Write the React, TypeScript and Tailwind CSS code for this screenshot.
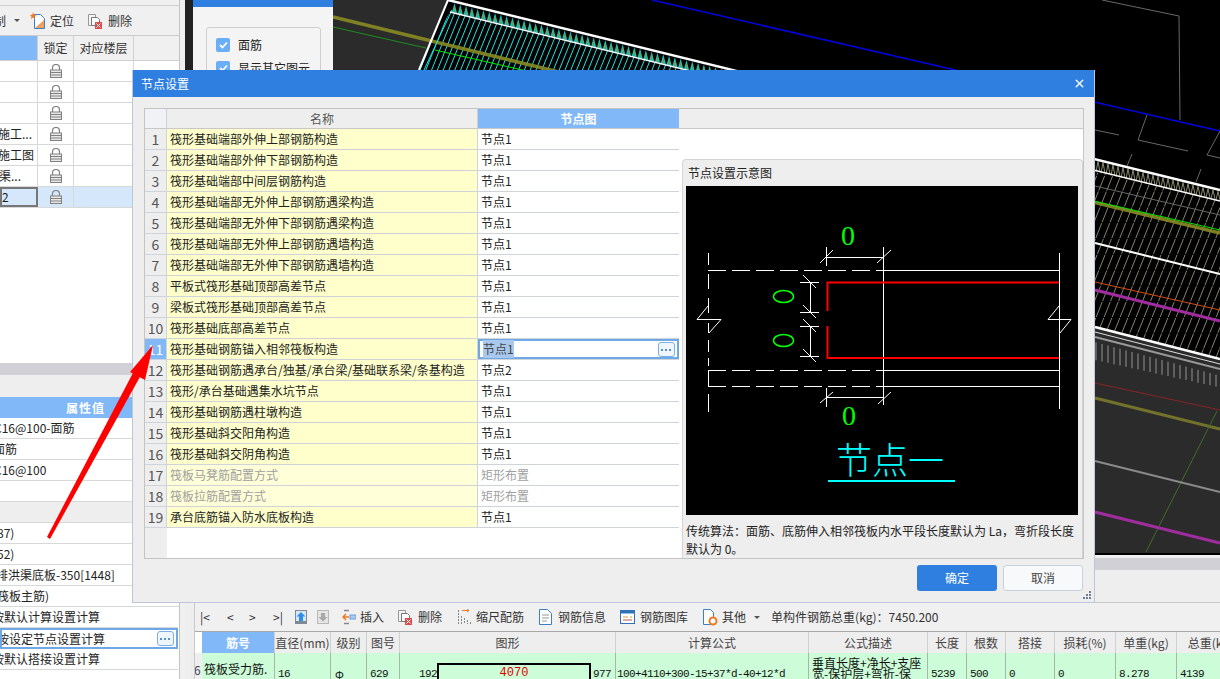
import { X } from "lucide-react";

const nodeRows = [
  { name: "筏形基础端部外伸上部钢筋构造", value: "节点1" },
  { name: "筏形基础端部外伸下部钢筋构造", value: "节点1" },
  { name: "筏形基础端部中间层钢筋构造", value: "节点1" },
  { name: "筏形基础端部无外伸上部钢筋遇梁构造", value: "节点1" },
  { name: "筏形基础端部无外伸下部钢筋遇梁构造", value: "节点1" },
  { name: "筏形基础端部无外伸上部钢筋遇墙构造", value: "节点1" },
  { name: "筏形基础端部无外伸下部钢筋遇墙构造", value: "节点1" },
  { name: "平板式筏形基础顶部高差节点", value: "节点1" },
  { name: "梁板式筏形基础顶部高差节点", value: "节点1" },
  { name: "筏形基础底部高差节点", value: "节点1" },
  { name: "筏形基础钢筋锚入相邻筏板构造", value: "节点1", editing: true },
  { name: "筏形基础钢筋遇承台/独基/承台梁/基础联系梁/条基构造", value: "节点2" },
  { name: "筏形/承台基础遇集水坑节点", value: "节点1" },
  { name: "筏形基础钢筋遇柱墩构造", value: "节点1" },
  { name: "筏形基础斜交阳角构造", value: "节点1" },
  { name: "筏形基础斜交阴角构造", value: "节点1" },
  { name: "筏板马凳筋配置方式", value: "矩形布置", muted: true },
  { name: "筏板拉筋配置方式", value: "矩形布置", muted: true },
  { name: "承台底筋锚入防水底板构造", value: "节点1" },
];

const layerRows = [
  { text: "", shift: "ml-0" },
  { text: "", shift: "ml-0" },
  { text: "", shift: "ml-0" },
  { text: "施工...", shift: "-ml-[2px]" },
  { text: "施工图", shift: "-ml-[2px]" },
  { text: "渠...", shift: "-ml-px" },
  { text: "2", shift: "ml-0", selected: true },
];

const propRows = [
  { text: "C16@100-面筋", shift: "-ml-[6px]" },
  { text: "面筋", shift: "-ml-[7px]" },
  { text: "C16@100", shift: "-ml-[6px]" },
  { text: "", shift: "ml-0" },
  { text: "", shift: "ml-0", section: true },
  { text: "87)", shift: "-ml-[3px]" },
  { text: "52)", shift: "-ml-[3px]" },
  { text: "排洪渠底板-350[1448]", shift: "-ml-[4px]" },
  { text: "筏板主筋)", shift: "-ml-[3px]" },
];

const calcRows = [
  { text: "按默认计算设置计算", shift: "-ml-[8px]" },
  { text: "按设定节点设置计算", shift: "-ml-[5px]", active: true },
  { text: "按默认搭接设置计算", shift: "-ml-[8px]" },
];

const gridCols = [
  { label: "筋号", w: "w-[73px]", active: true },
  { label: "直径(mm)", w: "w-[56px]" },
  { label: "级别", w: "w-[36px]" },
  { label: "图号", w: "w-[33px]" },
  { label: "图形", w: "w-[216px]" },
  { label: "计算公式", w: "w-[193px]" },
  { label: "公式描述", w: "w-[119px]" },
  { label: "长度", w: "w-[39px]" },
  { label: "根数", w: "w-[39px]" },
  { label: "搭接", w: "w-[49px]" },
  { label: "损耗(%)", w: "w-[61px]" },
  { label: "单重(kg)", w: "w-[61px]" },
  { label: "总重(kg)", w: "w-[68px]" },
];

const range = (from: number, to: number, step: number) => {
  const out: number[] = [];
  for (let v = from; v < to; v += step) out.push(v);
  return out;
};

function Lock() {
  return (
    <svg width="12" height="14" viewBox="0 0 12 14" fill="none">
      <path d="M2.5 6V4a3.5 3.5 0 0 1 7 0v2" stroke="#808080" strokeWidth="1.2" />
      <rect x="0.5" y="6" width="11" height="7.5" fill="#e8e8e8" stroke="#808080" />
      <path d="M1 8.5h10M1 11h10" stroke="#808080" />
    </svg>
  );
}

function DeleteIcon() {
  return (
    <svg width="15" height="16" viewBox="0 0 15 16" fill="none">
      <path d="M.5 1.5h7v11h-7z" stroke="#999" fill="#f4f4f4" />
      <path d="M3.5 4.5h6l2 2v6h-8z" stroke="#777" fill="#fff" />
      <rect x="7" y="9" width="7" height="7" fill="#d94a4a" />
      <path d="M8.5 10.5l4 4m0-4l-4 4" stroke="#fff" />
    </svg>
  );
}

function LocateIcon() {
  return (
    <svg width="16" height="17" viewBox="0 0 16 17" fill="none">
      <path d="M4.5 2.5h6l4 4v10h-10z" stroke="#3a7fc8" fill="#fff" />
      <path d="M5 16l9-8v8z" fill="#f0a060" />
      <path d="M3 0l1 2.500 2.500.5-2 1.500.5 2.500-2-1.500-2 1.500.5-2.500-1.500-1.500 2.500-.5z" fill="#ee7a22" />
    </svg>
  );
}

function InsertIcon() {
  return (
    <svg width="14" height="16" viewBox="0 0 14 16" fill="none">
      <path d="M2 1.500h5M2 14.500h5" stroke="#888" strokeWidth="1.500" />
      <rect x="8" y="6" width="6" height="4" fill="#a8cdf0" stroke="#6a9fd0" />
      <path d="M7 8H1m3-3L1 8l3 3" stroke="#ee7a22" strokeWidth="1.500" />
    </svg>
  );
}

function ScaleIcon() {
  return (
    <svg width="14" height="16" viewBox="0 0 14 16" fill="none">
      <path d="M4 1.500h7m-2-1.500l2 1.500-2 1.500" stroke="#ee7a22" />
      <path d="M.5 1v14M3.500 7v8M6.500 9v6M9.500 11v4M12.500 13v2" stroke="#888" strokeDasharray="2 1" />
    </svg>
  );
}

function DocIcon() {
  return (
    <svg width="13" height="16" viewBox="0 0 13 16" fill="none">
      <path d="M.5.500h8l4 4v11H.5z" stroke="#3a7fc8" fill="#fff" />
      <path d="M3 6h7M3 9h7M3 12h5" stroke="#999" />
    </svg>
  );
}

function LibraryIcon() {
  return (
    <svg width="15" height="14" viewBox="0 0 15 14" fill="none">
      <rect x=".5" y=".5" width="14" height="13" fill="#fff" stroke="#2f72b8" />
      <rect x=".5" y=".5" width="14" height="3" fill="#2f72b8" />
      <path d="M3 7h5M10 7h2" stroke="#d0a040" />
      <path d="M3 10h9" stroke="#c05050" />
    </svg>
  );
}

function OtherIcon() {
  return (
    <svg width="15" height="17" viewBox="0 0 15 17" fill="none">
      <path d="M.5.500h7l3 3v12H.5z" stroke="#3a7fc8" fill="#fff" />
      <circle cx="10" cy="12" r="3.500" stroke="#ee7a22" strokeWidth="2" fill="#fff" />
    </svg>
  );
}

function MoveUpIcon() {
  return (
    <svg width="12" height="14" viewBox="0 0 12 14">
      <rect width="12" height="14" fill="#d8e6f4" />
      <rect y="11" width="12" height="3" fill="#7f8a94" />
      <rect width="12" height="1" fill="#7f8a94" />
      <rect width="1" height="14" fill="#7f8a94" />
      <rect x="11" width="1" height="14" fill="#7f8a94" />
      <path d="M6 2l4.500 4.500H8V11H4V6.500H1.500z" fill="#2f8fe8" />
    </svg>
  );
}

function MoveDownIcon() {
  return (
    <svg width="12" height="14" viewBox="0 0 12 14">
      <rect width="12" height="14" fill="#e4e4e4" />
      <rect width="12" height="1" fill="#b8b8b8" />
      <rect y="13" width="12" height="1" fill="#b8b8b8" />
      <rect width="1" height="14" fill="#b8b8b8" />
      <rect x="11" width="1" height="14" fill="#b8b8b8" />
      <path d="M6 11.500l4.500-4.500H8V3H4v4H1.500z" fill="#a8a8a8" />
    </svg>
  );
}

function DotsButton() {
  return (
    <span className="flex h-[15px] w-[17px] items-center justify-center rounded-[3px] border border-[#7ab0e8] bg-[#eef5fd] text-[11px] leading-none text-[#4a8ad0]">
      <svg width="11" height="3" viewBox="0 0 11 3" fill="#5a90d0">
        <rect x="0" y="1" width="2" height="2" />
        <rect x="4" y="1" width="2" height="2" />
        <rect x="8" y="1" width="2" height="2" />
      </svg>
    </span>
  );
}

function Caret() {
  return <span className="h-0 w-0 border-x-[3px] border-t-[3px] border-x-transparent border-t-[#555]" />;
}

function CadView() {
  const upperEdge = (x: number) => 0.2455 * (x - 448);
  return (
    <svg viewBox="333 0 887 555" className="block h-[555px] w-[887px] bg-[#2b2b2b]">
      <defs>
        <clipPath id="cyanHatch">
          <polygon points="450,12 700,72 415,72" />
        </clipPath>
        <clipPath id="greyHatch">
          <polygon points="1095,172 1220,201 1220,359 1095,327" />
        </clipPath>
      </defs>
      <polygon points="448,0 1220,0 1220,359 386,150" fill="#000" />
      <g clipPath="url(#cyanHatch)" stroke="#19e6e6" strokeWidth="1">
        {range(425, 760, 5.8).map((x) => (
          <line key={x} x1={x} y1="0" x2={x - 29} y2="72" />
        ))}
      </g>
      {range(452, 720, 5.8).map((x) => (
        <g key={x}>
          <polygon points={`${x},${upperEdge(x) + 11} ${x + 2.500},${upperEdge(x) + 2} ${x + 5},${upperEdge(x) + 12}`} fill="#0fc8c8" />
          <line x1={x + 2.500} y1={upperEdge(x) + 6} x2={x + 2.500} y2={upperEdge(x) + 11} stroke="#a08a10" strokeWidth="1" />
        </g>
      ))}
      <g clipPath="url(#greyHatch)" stroke="#85856c" strokeWidth="1" strokeDasharray="16 1">
        {range(1095, 1320, 8).map((x) => (
          <line key={x} x1={x} y1="160" x2={x - 80} y2="360" />
        ))}
      </g>
      <g stroke="#8a8a70" strokeWidth="1">
        {range(1096, 1220, 5).map((x) => (
          <polyline key={x} fill="none" points={`${x},${172 + (x - 1095) * 0.232} ${x + 2},${161 + (x - 1095) * 0.25} ${x + 4},${172 + (x - 1095) * 0.232}`} />
        ))}
      </g>
      <g stroke="#5f5f5f" strokeWidth="2">
        {range(1096, 1220, 6).map((x) => (
          <line key={x} x1={x} y1={342 + (x - 1095) * 0.27} x2={x} y2={360 + (x - 1095) * 0.22} />
        ))}
      </g>
      <line x1="333" y1="17" x2="1220" y2="233" stroke="#8a8a24" strokeWidth="3.500" opacity="0.9" />
      <line x1="333" y1="27" x2="426" y2="48" stroke="#1c8f1c" strokeWidth="1" />
      <line x1="435" y1="50" x2="1220" y2="230" stroke="#00e600" strokeWidth="1" />
      <line x1="652" y1="0" x2="1220" y2="131" stroke="#0000e0" strokeWidth="1.500" />
      <line x1="448" y1="0" x2="419" y2="70" stroke="#fff" strokeWidth="2" />
      <line x1="452" y1="10" x2="424" y2="70" stroke="#19e6e6" strokeWidth="1" />
      <line x1="448" y1="0" x2="1220" y2="190" stroke="#fff" strokeWidth="2.500" />
      <line x1="450" y1="12" x2="1220" y2="201" stroke="#fff" strokeWidth="1.500" />
      <line x1="1095" y1="186" x2="1220" y2="215" stroke="#666" strokeWidth="1" />
      <line x1="1095" y1="243" x2="1220" y2="274" stroke="#fff" strokeWidth="2" />
      <line x1="1095" y1="282" x2="1220" y2="310" stroke="#d84a10" strokeWidth="1" />
      <line x1="1095" y1="290" x2="1220" y2="321" stroke="#a02ca0" strokeWidth="3" />
      <line x1="1095" y1="327" x2="1220" y2="359" stroke="#fff" strokeWidth="2.500" />
      <line x1="1095" y1="332" x2="1220" y2="364" stroke="#ddd" strokeWidth="1" />
      <line x1="1095" y1="337" x2="1220" y2="369" stroke="#999" strokeWidth="2" />
      <line x1="1095" y1="383" x2="1220" y2="410" stroke="#8a2424" strokeWidth="1" />
      <line x1="1095" y1="398" x2="1220" y2="429" stroke="#72722c" strokeWidth="3" />
      <line x1="1146" y1="552" x2="1217" y2="411" stroke="#3f6f2a" strokeWidth="1" />
      <line x1="1095" y1="461" x2="1220" y2="492" stroke="#8a8a8a" strokeWidth="2" />
      <line x1="1095" y1="512" x2="1220" y2="543" stroke="#a02ca0" strokeWidth="3" />
      <g fill="none" stroke="#686868" strokeWidth="1">
        <polyline points="1102,0 1179,16 1180,120" />
        <polyline points="1095,130 1119,135" />
        <polyline points="1147,115 1138,140 1188,151" />
        <polyline points="1220,131 1207,155 1220,158" />
        <line x1="1132" y1="154" x2="1127" y2="166" />
        <line x1="1201" y1="169" x2="1196" y2="182" />
      </g>
      <rect x="333" y="553" width="887" height="2" fill="#000" />
    </svg>
  );
}

function NodeDiagram() {
  return (
    <svg viewBox="686 186 392 329" className="block h-[329px] w-[392px] bg-black">
      <g stroke="#fff" strokeWidth="1" fill="none">
        <path d="M708.500 253v12M708.500 274v15M708.500 298v15M708.500 323v10M708.500 340v12M708.500 358v8M708.500 370.500v16M708.500 394v18" />
        <path d="M708 270.500h175" strokeDasharray="18 6" />
        <path d="M883 270.500h177M883 370.500h177M883 386.500h177" />
        <path d="M708 370.500h175M708 386.500h175" strokeDasharray="18 6" />
        <path d="M883.500 247v156M1059.500 253v156" />
        <path d="M826 257.500h57M826.500 247v19M883.500 247v19M820 263l13-13M877 263l14-13" />
        <path d="M810.500 282v30M810.500 326v31M800 282.500h19M800 312.500h19M800 326.500h19M800 356.500h19" />
        <path d="M803 275l13 13M803 305l13 13M803 319l13 13M803 349l13 13" />
        <path d="M826 397.500h57M826.500 388v19M883.500 388v17M820 403l13-11M878 404l13-12" />
        <polyline points="708,306 697,319.500 721,319.500 709,333" />
        <polyline points="1059,306 1048,319.500 1071,319.500 1060,333" />
      </g>
      <path d="M1059 282.500H827.500V311M827.500 326V358H1059" stroke="#f00" strokeWidth="2" fill="none" />
      <ellipse cx="783.500" cy="296.500" rx="10" ry="6" stroke="#0f0" strokeWidth="1.500" fill="none" />
      <ellipse cx="783.500" cy="340.500" rx="10" ry="6" stroke="#0f0" strokeWidth="1.500" fill="none" />
      <text x="848" y="245" textAnchor="middle" fill="#0f0" fontSize="28" fontFamily="'Liberation Serif', serif">0</text>
      <text x="849" y="425" textAnchor="middle" fill="#0f0" fontSize="28" fontFamily="'Liberation Serif', serif">0</text>
      <text x="836" y="474" fill="#0ff" fontSize="36" fontWeight="300" fontFamily="'Noto Sans CJK SC', sans-serif">节点一</text>
      <rect x="828" y="480" width="127" height="2" fill="#0ff" />
    </svg>
  );
}

function NodeDialog() {
  return (
    <div className="absolute left-[132px] top-[70px] flex h-[533px] w-[963px] flex-col border-x border-b border-[#bcc8da] bg-[#eeeeee]">
      <div className="flex h-[27px] shrink-0 items-center justify-between bg-[#2e7fe0] pl-2 pr-2 text-white">
        <span>节点设置</span>
        <X size={13} strokeWidth={2.500} />
      </div>
      <div className="ml-[11px] mt-[11px] flex h-[451px] w-[940px] flex-col border border-[#c4c4c4] bg-white">
        <div className="flex h-5 shrink-0 border-b border-[#c8c8c8] bg-[#eeeeee]">
          <div className="w-[22px] border-r border-[#d0d0d0] bg-[#f0f2f6]" />
          <div className="flex w-[311px] items-center justify-center border-r border-[#d0d0d0] text-[#555]">名称</div>
          <div className="flex w-[201px] items-center justify-center bg-[#80b8f8] font-bold text-white">节点图</div>
        </div>
        <div className="flex min-h-0 flex-1">
          <div className="flex w-[534px] shrink-0 flex-col">
            {nodeRows.map((row, i) => (
              <div key={row.name} className="flex h-[21px] shrink-0 border-b border-[#cfd3da]">
                <div className={row.editing ? "flex w-[22px] items-center justify-center border-r border-[#cfd3da] bg-[#80b8f8] text-[14px] text-white" : "flex w-[22px] items-center justify-center border-r border-[#cfd3da] bg-[#eeeeee] text-[14px] text-[#555]"}>
                  {i + 1}
                </div>
                <div className={row.muted ? "flex w-[311px] items-center whitespace-nowrap border-r border-[#cfd3da] bg-[#ffffd8] pl-[3px] text-[#a0a0a0]" : "flex w-[311px] items-center whitespace-nowrap border-r border-[#cfd3da] bg-[#ffffcb] pl-[3px] text-[#222]"}>
                  {row.name}
                </div>
                {row.editing ? (
                  <div className="flex w-[201px] items-center justify-between border-2 border-[#6ea8e6] pl-[3px] pr-[2px]">
                    <span className="bg-[#a9c8ee] text-[#444]">{row.value}</span>
                    <DotsButton />
                  </div>
                ) : (
                  <div className={row.muted ? "flex w-[201px] items-center pl-[3px] text-[#a0a0a0]" : "flex w-[201px] items-center pl-[3px] text-[#222]"}>
                    {row.value}
                  </div>
                )}
              </div>
            ))}
            <div className="flex-1">
              <div className="h-full w-[22px] bg-[#eeeeee]" />
            </div>
          </div>
          <div className="flex min-w-0 flex-1 flex-col">
            <div className="h-[30px] shrink-0" />
            <div className="ml-[3px] flex min-h-0 flex-1 flex-col rounded-t-[4px] border-x border-t border-[#d4d4d4] bg-[#eeeeee] px-[3px]">
              <div className="flex h-[26px] shrink-0 items-center pl-[2px] text-[#222]">节点设置示意图</div>
              <NodeDiagram />
              <p className="mt-[7px] text-[12px] leading-[18px] text-[#222]">传统算法：面筋、底筋伸入相邻筏板内水平段长度默认为 La，弯折段长度默认为 0。</p>
            </div>
          </div>
        </div>
      </div>
      <div className="mr-[11px] mt-[6px] flex justify-end gap-[6px]">
        <div className="flex h-[26px] w-[80px] items-center justify-center rounded-[3px] bg-[#2e7fe0] text-white">确定</div>
        <div className="flex h-[26px] w-[80px] items-center justify-center rounded-[3px] border border-[#c8d0dc] bg-[#f8f9fa] text-[#444]">取消</div>
      </div>
      <svg width="10" height="10" viewBox="0 0 10 10" fill="#6f7f90" className="absolute bottom-[2px] right-[2px]">
        <rect x="7" y="1" width="2" height="2" />
        <rect x="4" y="4" width="2" height="2" />
        <rect x="7" y="4" width="2" height="2" />
        <rect x="1" y="7" width="2" height="2" />
        <rect x="4" y="7" width="2" height="2" />
        <rect x="7" y="7" width="2" height="2" />
      </svg>
    </div>
  );
}

function LeftPanel() {
  return (
    <div className="flex h-[679px] w-[180px] shrink-0 flex-col overflow-hidden border-r border-[#c4c4c4] bg-white">
      <div className="h-[6px] shrink-0 border-b border-[#d0d0d0] bg-[#f0f0f0]" />
      <div className="flex h-[30px] shrink-0 items-center whitespace-nowrap border-b border-[#cccccc] bg-[#f0f0f0] text-[#333]">
        <span className="-ml-[18px]">复制</span>
        <span className="ml-2 mr-[10px] flex"><Caret /></span>
        <LocateIcon />
        <span className="ml-[4px]">定位</span>
        <span className="ml-[14px]"><DeleteIcon /></span>
        <span className="ml-[5px]">删除</span>
      </div>
      <div className="flex h-[25px] shrink-0 border-b border-[#d0d0d0] bg-[#f0f0f0] text-[#333]">
        <div className="w-[38px] border-r border-[#d0d0d0] bg-[#80b8f8]" />
        <div className="flex w-[36px] items-center justify-center border-r border-[#d0d0d0]">锁定</div>
        <div className="flex w-[60px] items-center justify-center border-r border-[#d0d0d0]">对应楼层</div>
      </div>
      {layerRows.map((row, i) => (
        <div key={i} className={row.selected ? "flex h-[21px] shrink-0 border-b border-[#d8d8d8] bg-[#d5e8fb]" : "flex h-[21px] shrink-0 border-b border-[#d8d8d8]"}>
          <div className={row.selected ? "flex w-[38px] items-center overflow-hidden whitespace-nowrap border-2 border-[#777] text-[#222]" : "flex w-[38px] items-center overflow-hidden whitespace-nowrap border-r border-[#d8d8d8] text-[#222]"}>
            <span className={row.shift}>{row.text}</span>
          </div>
          <div className="flex w-[36px] items-center justify-center border-r border-[#d8d8d8]"><Lock /></div>
          <div className="w-[60px] border-r border-[#d8d8d8]" />
        </div>
      ))}
      <div className="h-[155px] shrink-0" />
      <div className="h-[12px] shrink-0 bg-[#d0d0d6]" />
      <div className="h-[22px] shrink-0 bg-[#eeeeee]" />
      <div className="flex h-[21px] shrink-0 items-center bg-[#80b8f8] pl-[66px] font-bold tracking-[1px] text-white">属性值</div>
      {propRows.map((row, i) => (
        <div key={i} className={row.section ? "flex h-[21px] shrink-0 items-center overflow-hidden whitespace-nowrap border-b border-[#d8d8d8] bg-[#eeeeee]" : "flex h-[21px] shrink-0 items-center overflow-hidden whitespace-nowrap border-b border-[#d8d8d8] text-[#222]"}>
          <span className={row.shift}>{row.text}</span>
        </div>
      ))}
      {calcRows.map((row) => (
        <div key={row.text} className={row.active ? "flex h-[21px] w-[178px] shrink-0 items-center justify-between overflow-hidden whitespace-nowrap border-2 border-[#6ea8e6] pr-[2px] text-[#222]" : "flex h-[21px] w-[178px] shrink-0 items-center overflow-hidden whitespace-nowrap border-b border-[#d8d8d8] text-[#222]"}>
          <span className={row.shift}>{row.text}</span>
          {row.active && <DotsButton />}
        </div>
      ))}
    </div>
  );
}

function PropertyPanel() {
  return (
    <div className="flex h-[555px] w-[140px] shrink-0 flex-col bg-[#f4f4f4]">
      <div className="h-[7px] shrink-0 bg-[#2e7fe0]" />
      <div className="ml-[13px] mt-5 flex w-[115px] flex-col gap-[9px] rounded-[3px] border border-[#cfcfcf] px-[9px] pt-[10px] pb-2 text-[#222]">
        {["面筋", "显示其它图元"].map((label) => (
          <div key={label} className="flex h-[14px] items-center gap-2 whitespace-nowrap">
            <span className="flex h-[14px] w-[14px] shrink-0 items-center justify-center rounded-[2px] bg-[#6aaef8]">
              <svg width="9" height="8" viewBox="0 0 9 8" fill="none">
                <path d="M1 4l2.500 2.500L8 1.500" stroke="#fff" strokeWidth="1.800" />
              </svg>
            </span>
            <span>{label}</span>
          </div>
        ))}
      </div>
    </div>
  );
}

function Toolbar() {
  return (
    <div className="flex h-[28px] shrink-0 items-center whitespace-nowrap bg-[#f0f0f0] text-[#333]">
      <span className="ml-[5px] w-[27px]">|&lt;</span>
      <span className="w-[22px]">&lt;</span>
      <span className="w-[24px]">&gt;</span>
      <span className="w-[22px]">&gt;|</span>
      <MoveUpIcon />
      <span className="ml-[10px] flex"><MoveDownIcon /></span>
      <span className="ml-[13px] flex"><InsertIcon /></span>
      <span className="ml-[4px]">插入</span>
      <span className="ml-[14px] flex"><DeleteIcon /></span>
      <span className="ml-[5px]">删除</span>
      <span className="ml-[16px] flex"><ScaleIcon /></span>
      <span className="ml-[4px]">缩尺配筋</span>
      <span className="ml-[15px] flex"><DocIcon /></span>
      <span className="ml-[6px]">钢筋信息</span>
      <span className="ml-[14px] flex"><LibraryIcon /></span>
      <span className="ml-[5px]">钢筋图库</span>
      <span className="ml-[15px] flex"><OtherIcon /></span>
      <span className="ml-[4px]">其他</span>
      <span className="ml-2 flex"><Caret /></span>
      <span className="ml-[11px]">单构件钢筋总重(kg)：7450.200</span>
    </div>
  );
}

function RebarGrid() {
  const cellMono = "font-['Liberation_Mono',monospace] text-[11px] tracking-[-0.6px] text-[#111]";
  return (
    <div className="flex min-h-0 flex-1 flex-col overflow-hidden">
      <div className="flex h-[22px] shrink-0 border-t border-[#a8a8a8] bg-white">
        <div className="w-[7px] shrink-0 bg-white" />
        {gridCols.map((col) => (
          <div key={col.label} className={col.active ? `${col.w} flex shrink-0 items-center justify-center overflow-hidden whitespace-nowrap border-r border-[#d0d0d0] bg-[#80b8f8] font-bold text-white` : `${col.w} flex shrink-0 items-center justify-center overflow-hidden whitespace-nowrap border-r border-[#d0d0d0] bg-[#eeeeee] text-[#444]`}>
            {col.label}
          </div>
        ))}
      </div>
      <div className="flex h-[26px] shrink-0 overflow-hidden bg-[#ccfdd8]">
        <div className="flex w-[7px] shrink-0 items-end overflow-hidden bg-[#eeeeee] text-[#444]">
          <span className="-ml-[1px]">6</span>
        </div>
        <div className="w-[73px] shrink-0 overflow-hidden border-r border-[#a8b8a8] pl-[2px] pt-[9px] leading-[14px] text-[#111]">
          筏板受力筋.<br />1
        </div>
        <div className={`${cellMono} w-[56px] shrink-0 border-r border-[#a8b8a8] pl-[3px] pt-[13px]`}>16</div>
        <div className="w-[36px] shrink-0 border-r border-[#a8b8a8] pl-[4px] pt-[13px] text-[11px] text-[#111]">Φ</div>
        <div className={`${cellMono} w-[33px] shrink-0 border-r border-[#a8b8a8] pl-[3px] pt-[13px]`}>629</div>
        <div className={`${cellMono} flex w-[216px] shrink-0 items-start border-r border-[#a8b8a8]`}>
          <span className="w-[37px] pt-[13px] text-right">192</span>
          <div className="mt-[10px] h-[30px] w-[154px] shrink-0 border-2 border-black text-center text-[12px] leading-[17px] tracking-normal text-[#e00000]">4070</div>
          <span className="pl-[2px] pt-[13px]">977</span>
        </div>
        <div className={`${cellMono} w-[193px] shrink-0 overflow-hidden whitespace-nowrap border-r border-[#a8b8a8] pl-[1px] pt-[13px]`}>100+4110+300-15+37*d-40+12*d</div>
        <div className="w-[119px] shrink-0 overflow-hidden border-r border-[#a8b8a8] pl-[3px] pt-[4px] text-[12px] leading-[11px] text-[#111]">垂直长度+净长+支座宽-保护层+弯折-保</div>
        {["5239", "500", "0", "0", "8.278", "4139"].map((value, i) => (
          <div key={i} className={`${cellMono} ${["w-[39px]", "w-[39px]", "w-[49px]", "w-[61px]", "w-[61px]", "w-[68px]"][i]} shrink-0 border-r border-[#a8b8a8] pl-[3px] pt-[13px]`}>
            {value}
          </div>
        ))}
      </div>
    </div>
  );
}

export default function App() {
  return (
    <div className="relative flex h-[679px] w-[1220px] overflow-hidden bg-[#eeeeee] font-['Noto_Sans_CJK_SC',sans-serif] text-[12px]">
      <LeftPanel />
      <div className="w-[5px] shrink-0 bg-[#f0f0f0]" />
      <div className="flex w-[1035px] shrink-0 flex-col">
        <div className="flex h-[555px] shrink-0">
          <div className="w-[8px] shrink-0 bg-[#222222]" />
          <PropertyPanel />
          <CadView />
        </div>
        <div className="h-[3px] shrink-0 bg-[#f0f0f0]" />
        <div className="h-[12px] shrink-0 bg-[#d0d0d6]" />
        <div className="h-[32px] shrink-0 bg-[#eeeeee]" />
        <div className="ml-[9px] flex min-h-0 flex-1 flex-col border-l border-t border-[#c8c8c8]">
          <Toolbar />
          <RebarGrid />
        </div>
      </div>
      <NodeDialog />
      <svg width="120" height="210" viewBox="40 340 120 210" className="absolute left-[40px] top-[340px]">
        <polygon points="47,537 50,539 141,375 134,371" fill="#f00" />
        <polygon points="153,345 130,372 145,380" fill="#f00" />
      </svg>
    </div>
  );
}
